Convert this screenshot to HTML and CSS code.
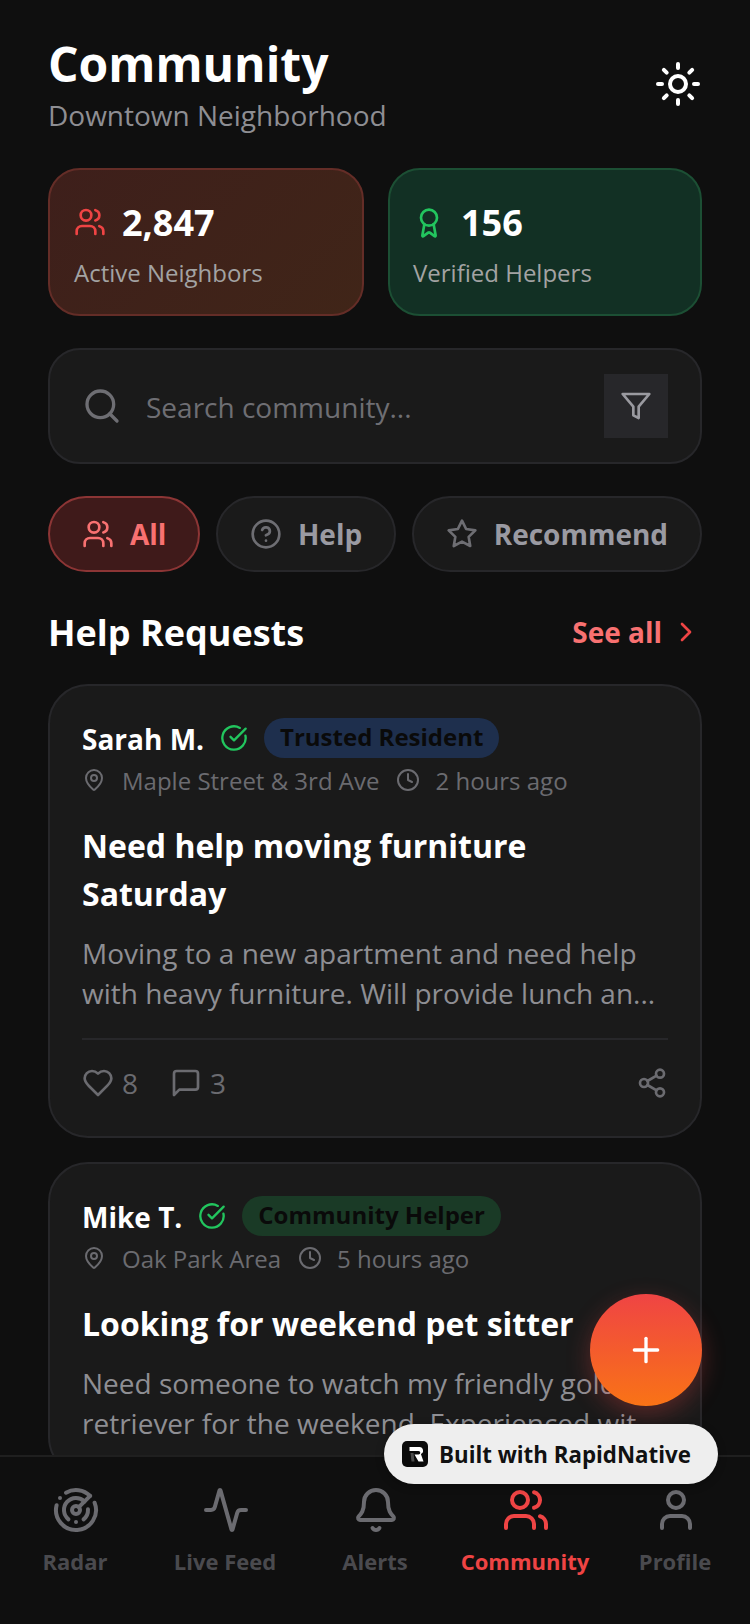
FILE: index.html
```html
<!DOCTYPE html>
<html lang="en">
<head>
<meta charset="UTF-8">
<meta name="viewport" content="width=device-width, initial-scale=1.0">
<title>Community</title>
<link rel="stylesheet" href="styles.css">
</head>
<body>

<svg class="sprite" aria-hidden="true">
    <symbol id="i-users" viewBox="0 0 24 24"><path d="M16 21v-2a4 4 0 0 0-4-4H6a4 4 0 0 0-4 4v2"/><circle cx="9" cy="7" r="4"/><path d="M22 21v-2a4 4 0 0 0-3-3.87"/><path d="M16 3.13a4 4 0 0 1 0 7.75"/></symbol>
    <symbol id="i-award" viewBox="0 0 24 24"><path d="m15.477 12.89 1.515 8.526a.5.5 0 0 1-.81.47l-3.58-2.687a1 1 0 0 0-1.197 0l-3.586 2.686a.5.5 0 0 1-.81-.469l1.514-8.526"/><circle cx="12" cy="8" r="6"/></symbol>
    <symbol id="i-sun" viewBox="0 0 24 24"><circle cx="12" cy="12" r="4"/><path d="M12 2v2"/><path d="M12 20v2"/><path d="m4.93 4.93 1.41 1.41"/><path d="m17.66 17.66 1.41 1.41"/><path d="M2 12h2"/><path d="M20 12h2"/><path d="m6.34 17.66-1.41 1.41"/><path d="m19.07 4.93-1.41 1.41"/></symbol>
    <symbol id="i-search" viewBox="0 0 24 24"><path d="m21 21-4.34-4.34"/><circle cx="11" cy="11" r="8"/></symbol>
    <symbol id="i-filter" viewBox="0 0 24 24"><polygon points="22 3 2 3 10 12.46 10 19 14 21 14 12.46 22 3"/></symbol>
    <symbol id="i-help" viewBox="0 0 24 24"><circle cx="12" cy="12" r="10"/><path d="M9.09 9a3 3 0 0 1 5.83 1c0 2-3 3-3 3"/><path d="M12 17h.01"/></symbol>
    <symbol id="i-star" viewBox="0 0 24 24"><polygon points="12 2 15.09 8.26 22 9.27 17 14.14 18.18 21.02 12 17.77 5.82 21.02 7 14.14 2 9.27 8.91 8.26 12 2"/></symbol>
    <symbol id="i-chevron" viewBox="0 0 24 24"><path d="m9 18 6-6-6-6"/></symbol>
    <symbol id="i-check" viewBox="0 0 24 24"><path d="M21.801 10A10 10 0 1 1 17 3.335"/><path d="m9 11 3 3L22 4"/></symbol>
    <symbol id="i-pin" viewBox="0 0 24 24"><path d="M20 10c0 4.993-5.539 10.193-7.399 11.799a1 1 0 0 1-1.202 0C9.539 20.193 4 14.993 4 10a8 8 0 0 1 16 0"/><circle cx="12" cy="10" r="3"/></symbol>
    <symbol id="i-clock" viewBox="0 0 24 24"><circle cx="12" cy="12" r="10"/><polyline points="12 6 12 12 16 14"/></symbol>
    <symbol id="i-heart" viewBox="0 0 24 24"><path d="M19 14c1.49-1.46 3-3.21 3-5.5A5.5 5.5 0 0 0 16.5 3c-1.76 0-3 .5-4.5 2-1.5-1.5-2.74-2-4.5-2A5.5 5.5 0 0 0 2 8.5c0 2.3 1.5 4.05 3 5.5l7 7Z"/></symbol>
    <symbol id="i-message" viewBox="0 0 24 24"><path d="M21 15a2 2 0 0 1-2 2H7l-4 4V5a2 2 0 0 1 2-2h14a2 2 0 0 1 2 2z"/></symbol>
    <symbol id="i-share" viewBox="0 0 24 24"><circle cx="18" cy="5" r="3"/><circle cx="6" cy="12" r="3"/><circle cx="18" cy="19" r="3"/><line x1="8.59" y1="13.51" x2="15.42" y2="17.49"/><line x1="15.41" y1="6.51" x2="8.59" y2="10.49"/></symbol>
    <symbol id="i-plus" viewBox="0 0 24 24"><path d="M5 12h14"/><path d="M12 5v14"/></symbol>
    <symbol id="i-radar" viewBox="0 0 24 24"><path d="M19.07 4.93A10 10 0 0 0 6.99 3.34"/><path d="M4 6h.01"/><path d="M2.29 9.62A10 10 0 1 0 21.31 8.35"/><path d="M16.24 7.76A6 6 0 1 0 8.23 16.67"/><path d="M12 18h.01"/><path d="M17.99 11.66A6 6 0 0 1 15.77 16.67"/><circle cx="12" cy="12" r="2"/><path d="m13.41 10.59 5.66-5.66"/></symbol>
    <symbol id="i-activity" viewBox="0 0 24 24"><path d="M22 12h-2.48a2 2 0 0 0-1.93 1.46l-2.35 8.36a.25.25 0 0 1-.48 0L9.24 2.18a.25.25 0 0 0-.48 0l-2.35 8.36A2 2 0 0 1 4.49 12H2"/></symbol>
    <symbol id="i-bell" viewBox="0 0 24 24"><path d="M10.268 21a2 2 0 0 0 3.464 0"/><path d="M3.262 15.326A1 1 0 0 0 4 17h16a1 1 0 0 0 .74-1.673C19.41 13.956 18 12.499 18 8A6 6 0 0 0 6 8c0 4.499-1.411 5.956-2.738 7.326"/></symbol>
    <symbol id="i-user" viewBox="0 0 24 24"><path d="M19 21v-2a4 4 0 0 0-4-4H9a4 4 0 0 0-4 4v2"/><circle cx="12" cy="7" r="4"/></symbol>
</svg>

<div class="app">

    <div class="scroll">

        <!-- Header -->
        <div class="header">
            <div>
                <h1>Community</h1>
                <div class="subtitle">Downtown Neighborhood</div>
            </div>
            <svg class="icon sun"><use href="#i-sun"/></svg>
        </div>

        <!-- Stats -->
        <div class="stats">
            <div class="stat stat-red">
                <div class="stat-top">
                    <svg class="icon stat-icon"><use href="#i-users"/></svg>
                    <span class="stat-value">2,847</span>
                </div>
                <div class="stat-label">Active Neighbors</div>
            </div>
            <div class="stat stat-green">
                <div class="stat-top">
                    <svg class="icon stat-icon"><use href="#i-award"/></svg>
                    <span class="stat-value">156</span>
                </div>
                <div class="stat-label">Verified Helpers</div>
            </div>
        </div>

        <!-- Search -->
        <div class="search">
            <svg class="icon search-icon"><use href="#i-search"/></svg>
            <span class="search-text">Search community...</span>
            <div class="filter-btn"><svg class="icon"><use href="#i-filter"/></svg></div>
        </div>

        <!-- Category chips -->
        <div class="chips">
            <div class="chip chip-active"><svg class="icon"><use href="#i-users"/></svg>All</div>
            <div class="chip"><svg class="icon"><use href="#i-help"/></svg>Help</div>
            <div class="chip"><svg class="icon"><use href="#i-star"/></svg>Recommend</div>
        </div>

        <div class="section-head">
            <h2>Help Requests</h2>
            <div class="see-all">See all <svg class="icon"><use href="#i-chevron"/></svg></div>
        </div>

        <!-- Posts -->
        <div class="post">
            <div class="post-author">
                <span class="name">Sarah M.</span>
                <svg class="icon verified"><use href="#i-check"/></svg>
                <span class="tag tag-blue">Trusted Resident</span>
            </div>
            <div class="meta">
                <svg class="icon meta-pin"><use href="#i-pin"/></svg>
                <span>Maple Street &amp; 3rd Ave</span>
                <svg class="icon meta-clock"><use href="#i-clock"/></svg>
                <span>2 hours ago</span>
            </div>
            <h3>Need help moving furniture Saturday</h3>
            <p>Moving to a new apartment and need help with heavy furniture. Will provide lunch an...</p>
            <div class="post-foot">
                <div class="foot-item"><svg class="icon"><use href="#i-heart"/></svg>8</div>
                <div class="foot-item"><svg class="icon"><use href="#i-message"/></svg>3</div>
                <svg class="icon foot-share"><use href="#i-share"/></svg>
            </div>
        </div>

        <div class="post">
            <div class="post-author">
                <span class="name">Mike T.</span>
                <svg class="icon verified"><use href="#i-check"/></svg>
                <span class="tag tag-green">Community Helper</span>
            </div>
            <div class="meta">
                <svg class="icon meta-pin"><use href="#i-pin"/></svg>
                <span>Oak Park Area</span>
                <svg class="icon meta-clock"><use href="#i-clock"/></svg>
                <span>5 hours ago</span>
            </div>
            <h3>Looking for weekend pet sitter</h3>
            <p>Need someone to watch my friendly golden retriever for the weekend. Experienced wit...</p>
        </div>

    </div>

    <!-- Bottom tabs -->
    <div class="tabs">
        <div class="tab"><svg class="icon"><use href="#i-radar"/></svg>Radar</div>
        <div class="tab"><svg class="icon"><use href="#i-activity"/></svg>Live Feed</div>
        <div class="tab"><svg class="icon"><use href="#i-bell"/></svg>Alerts</div>
        <div class="tab tab-active"><svg class="icon"><use href="#i-users"/></svg>Community</div>
        <div class="tab"><svg class="icon"><use href="#i-user"/></svg>Profile</div>
    </div>

    <div class="fab"><svg class="icon"><use href="#i-plus"/></svg></div>

    <div class="built">
        <svg class="built-logo" viewBox="0 0 26 26">
            <rect width="26" height="26" rx="5" fill="#0a0a0a"/>
            <path d="M7.5 6h10a3.6 3.6 0 0 1 1.4 6.9L21.5 20.5h-5L12.5 13.5h4a1.8 1.8 0 0 0 0-3.6h-9z" fill="#fff"/>
            <path d="M8.5 12h3l1 8.5h-3z" fill="#4a4a4a"/>
        </svg>
        Built with RapidNative
    </div>

</div>

</body>
</html>
```

FILE: styles.css
```css
* { box-sizing: border-box; }
html, body { margin: 0; padding: 0; }
body { font-family: "Open Sans", "Liberation Sans", sans-serif; background-color: #0f0f0f; color: #fff; }
.sprite { display: none; }
.icon { fill: none; stroke: currentColor; stroke-width: 2; stroke-linecap: round; stroke-linejoin: round; flex-shrink: 0; }

.app { position: relative; width: 750px; height: 1624px; overflow: hidden; display: flex; flex-direction: column; }
.scroll { flex: 1; min-height: 0; overflow: hidden; padding: 36px 48px 0; }

.header { display: flex; justify-content: space-between; align-items: flex-start; }
h1 { font-size: 48px; line-height: 56px; font-weight: 700; margin: 0; }
.subtitle { font-size: 28px; line-height: 38px; margin-top: 4px; color: #8e8e93; }
.sun { width: 48px; height: 48px; color: #fff; margin-top: 24px; }

.stats { display: flex; gap: 24px; margin-top: 34px; }
.stat { height: 148px; border-radius: 32px; padding: 30px 24px 0; }
.stat-red { width: 316px; background: linear-gradient(135deg, #3e1f1b, #402518); border: 2px solid #642d27; }
.stat-green { flex: 1; padding-left: 23px; background: #123024; border: 2px solid #1c4f34; }
.stat-top { display: flex; align-items: center; gap: 16px; height: 46px; }
.stat-icon { width: 32px; height: 32px; }
.stat-red .stat-icon { color: #ef4444; margin-top: -2px; }
.stat-green .stat-icon { color: #22c55e; }
.stat-value { font-size: 36px; font-weight: 700; line-height: 44px; }
.stat-label { font-size: 24px; line-height: 32px; margin-top: 11px; color: #a3a3a3; }

.search { display: flex; align-items: center; height: 116px; margin-top: 32px; padding: 0 32px; background: #1a1a1a; border: 2px solid #27272a; border-radius: 32px; }
.search-icon { width: 40px; height: 40px; color: #6e6e73; margin-right: 24px; }
.search-text { flex: 1; font-size: 28px; padding-top: 2px; color: #6e6e73; }
.filter-btn { width: 64px; height: 64px; background: #27272a; display: flex; align-items: center; justify-content: center; color: #9a9aa0; }
.filter-btn .icon { width: 32px; height: 32px; }

.chips { display: flex; gap: 15.5px; margin-top: 32px; overflow: hidden; }
.chip { display: flex; align-items: center; gap: 16px; height: 76px; padding: 0 32px; border-radius: 38px; background: #1a1a1a; border: 2px solid #27272a; font-size: 28px; font-weight: 700; color: #9a9aa2; flex-shrink: 0; }
.chip .icon { width: 32px; height: 32px; color: #6e6e73; }
.chip-active { background: #3f1a1a; border-color: #8c3535; color: #f87171; }
.chip-active .icon { color: #f87171; }

.section-head { display: flex; justify-content: space-between; align-items: center; margin-top: 39px; height: 44px; }
h2 { font-size: 36px; font-weight: 700; margin: 0; line-height: 44px; }
.see-all { display: flex; align-items: center; gap: 8px; margin-top: -2px; font-size: 28px; font-weight: 700; color: #f87171; }
.see-all .icon { width: 32px; height: 32px; color: #ef4444; }

.post { margin-top: 24px; padding: 32px; background: #1a1a1a; border: 2px solid #27272a; border-radius: 40px; }
.section-head + .post { margin-top: 29px; }
.post-author { display: flex; align-items: center; gap: 16px; height: 40px; }
.name { font-size: 28px; font-weight: 700; line-height: 40px; margin-top: 2px; }
.verified { width: 28px; height: 28px; color: #22c55e; }
.tag { display: block; height: 40px; line-height: 38px; padding: 0 16px; border-radius: 20px; font-size: 24px; font-weight: 700; color: #0a0a0a; }
.tag-blue { background: #1e2f4d; }
.tag-green { background: #1a3a26; }

.meta { display: flex; align-items: center; height: 36px; margin-top: 4px; font-size: 24px; color: #6b6b70; }
.meta-pin { width: 24px; height: 24px; margin-right: 16px; }
.meta-clock { width: 24px; height: 24px; margin: 0 15px 0 17px; }

h3 { font-size: 32px; line-height: 48px; font-weight: 700; margin: 24px 0 0; }
p { font-size: 28px; line-height: 40px; color: #8e8e93; margin: 15px 0 0; }

.post-foot { display: flex; align-items: center; gap: 32px; margin-top: 25px; padding-top: 22px; border-top: 2px solid #27272a; height: 66px; color: #6b6b70; font-size: 28px; }
.foot-item { display: flex; align-items: center; gap: 8px; }
.foot-item .icon { width: 32px; height: 32px; }
.foot-share { width: 32px; height: 32px; margin-left: auto; }

.tabs { display: flex; height: 169px; padding-top: 29px; background: #0f0f0f; border-top: 2px solid #1f1f1f; }
.tab { flex: 1; display: flex; flex-direction: column; align-items: center; gap: 12px; font-size: 22px; font-weight: 700; line-height: 30px; color: #4a4a4e; }
.tab .icon { width: 48px; height: 48px; margin-left: 2px; color: #6b6b70; }
.tab-active { color: #ef4444; }
.tab-active .icon { color: #ef4444; }

.fab { position: absolute; left: 590px; top: 1294px; width: 112px; height: 112px; border-radius: 50%; background: linear-gradient(180deg, #ef4444, #f97316); display: flex; align-items: center; justify-content: center; box-shadow: 0 8px 24px rgba(239, 68, 68, 0.3); color: #fff; }
.fab .icon { width: 40px; height: 40px; }

.built { position: absolute; left: 384px; top: 1424px; width: 334px; height: 60px; border-radius: 30px; background: #eeeeee; display: flex; align-items: center; gap: 11px; padding-left: 18px; font-size: 22.3px; font-weight: 700; color: #111; box-shadow: 0 2px 8px rgba(0, 0, 0, 0.3); }
.built-logo { width: 26px; height: 26px; flex-shrink: 0; }
```
